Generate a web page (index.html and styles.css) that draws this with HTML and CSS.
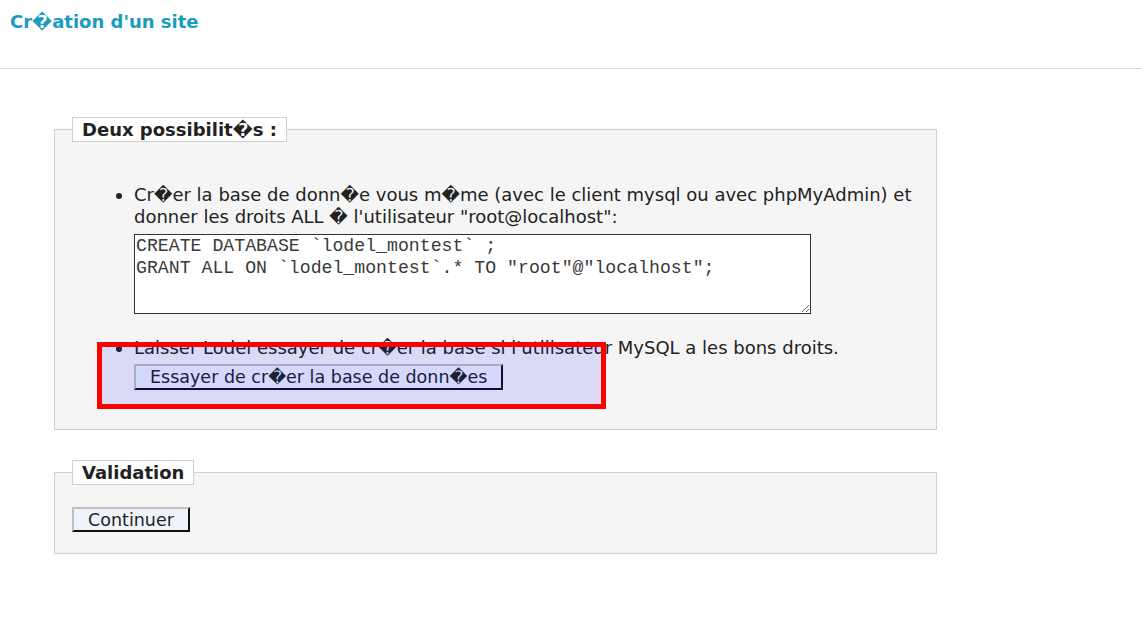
FILE: index.html
```html
<!DOCTYPE html>
<html lang="fr">
<head>
<meta charset="utf-8">
<title>Création d'un site</title>
<link rel="stylesheet" href="styles.css">
</head>
<body>
<header class="top">
  <h1 class="title">Cr�ation d'un site</h1>
</header>
<main class="content">
  <fieldset class="box box-first">
    <legend class="legend">Deux possibilit�s :</legend>
    <ul class="choices">
      <li class="choice">
        Cr�er la base de donn�e vous m�me (avec le client mysql ou avec phpMyAdmin) et donner les droits ALL � l'utilisateur "root@localhost":
        <textarea class="sql" rows="3">CREATE DATABASE `lodel_montest` ;
GRANT ALL ON `lodel_montest`.* TO "root"@"localhost";</textarea>
      </li>
      <li class="choice choice-second">
        Laisser Lodel essayer de cr�er la base si l'utilisateur MySQL a les bons droits.
        <div class="btn-row"><button class="btn btn-try" type="button">Essayer de cr�er la base de donn�es</button></div>
        <div class="highlight"></div>
      </li>
    </ul>
  </fieldset>
  <fieldset class="box box-second">
    <legend class="legend">Validation</legend>
    <div class="btn-row btn-row-validate"><button class="btn btn-continue" type="button">Continuer</button></div>
  </fieldset>
</main>
</body>
</html>
```
FILE: styles.css
```css
html, body {
  margin: 0;
  padding: 0;
  background: #fff;
}
body {
  font-family: "DejaVu Sans", Verdana, sans-serif;
  color: #222;
  font-size: 18px;
}
.top {
  height: 69px;
  border-bottom: 1px solid #dcdcdc;
  box-sizing: border-box;
  padding: 10px 10px 0;
}
.title {
  margin: 0;
  font-size: 18px;
  font-weight: bold;
  color: #1a9bc0;
  line-height: 23px;
}
.content {
  padding: 48px 0 0 54px;
  width: 883px;
}
.box {
  margin: 0;
  padding: 0;
  border: 1px solid #cfcfcf;
  background: #f5f5f5;
  min-inline-size: 0;
}
.legend {
  margin-left: 17px;
  padding: 0 9px;
  border: 1px solid #cfcfcf;
  background: #fff;
  font-weight: bold;
  font-size: 18px;
  line-height: 23px;
  color: #222;
}
.box-first {
  padding-bottom: 39px;
}
.choices {
  margin: 42px 0 0 0;
  padding: 0 0 0 79px;
  list-style: disc;
}
.choice {
  line-height: 22px;
  width: 790px;
}
.sql {
  display: block;
  width: 677px;
  height: 80px;
  box-sizing: border-box;
  margin: 6px 0 0 0;
  padding: 0 1px;
  border: 1px solid #333;
  background: #fff;
  font-family: "Liberation Mono", "Courier New", monospace;
  font-size: 18.2px;
  line-height: 22px;
  color: #3a3a3a;
  resize: both;
}
.choice-second {
  margin-top: 23px;
  position: relative;
}
.btn-row {
  display: flex;
  margin-top: 5px;
}
.btn {
  font-family: "DejaVu Sans", Verdana, sans-serif;
  font-size: 17.5px;
  color: #222;
  background: #eef3fc;
  border: 2px solid;
  border-color: #c0c0c0 #111 #111 #c0c0c0;
  line-height: 20px;
  margin: 0;
}
.btn-try {
  padding: 1px 14px;
  height: 26px;
}
.btn-continue {
  padding: 1px 14px 0;
  height: 25px;
}
.highlight {
  position: absolute;
  left: -37px;
  top: 5px;
  width: 509px;
  height: 67px;
  box-sizing: border-box;
  border: 5px solid #f00;
  background: rgba(0, 0, 255, 0.11);
}
.box-second {
  margin-top: 30px;
  padding-bottom: 21px;
}
.btn-row-validate {
  margin: 22px 0 0 17px;
}
```
